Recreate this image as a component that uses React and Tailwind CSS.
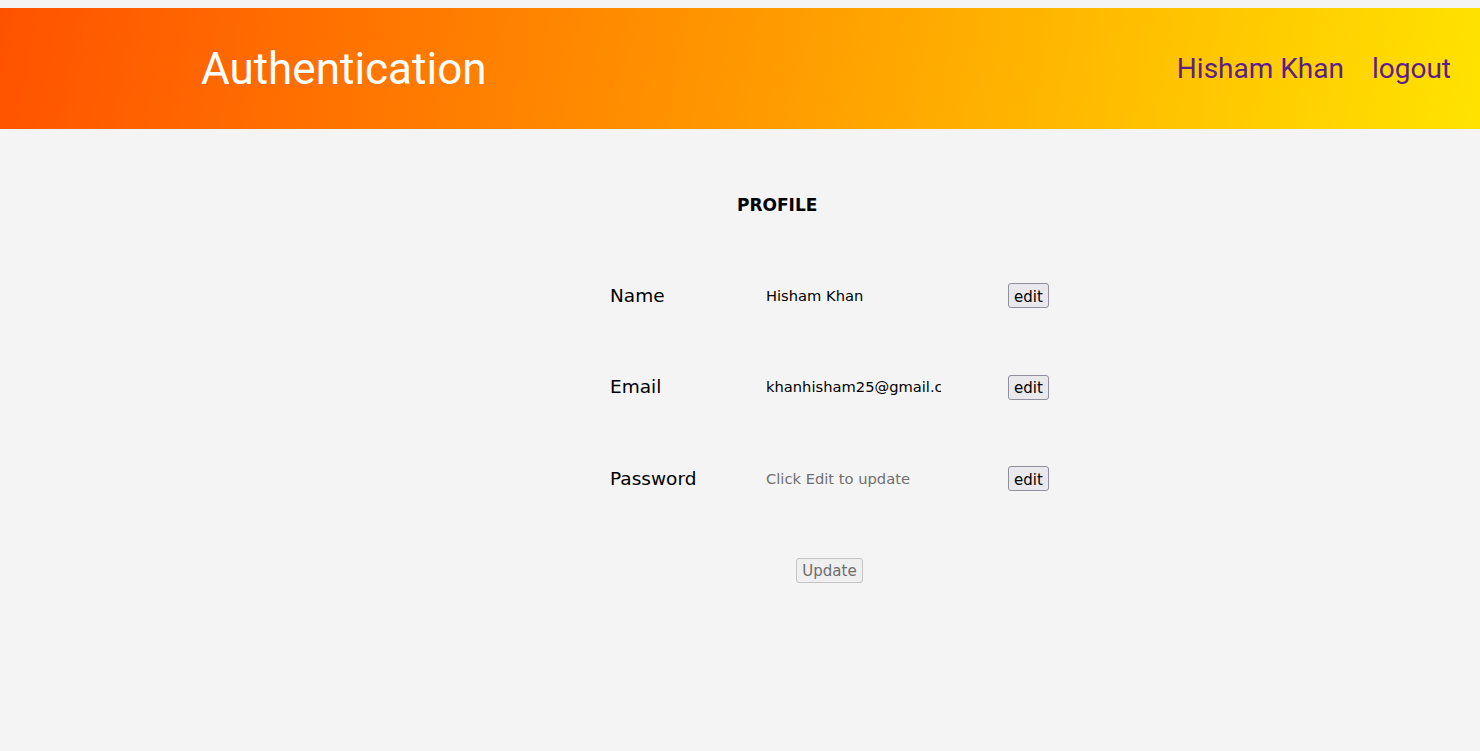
import React from 'react';

const fields = [
    { label: 'Name', value: 'Hisham Khan' },
    { label: 'Email', value: 'khanhisham25@gmail.com' },
    { label: 'Password', value: '', placeholder: 'Click Edit to update' },
];

// one row of the profile form
const FieldRow = ({ label, value, placeholder }) => (
    <div className="flex items-center h-[91.5px]">
        <label className="w-[156px] text-[18.5px] text-black">{label}</label>
        <input
            readOnly
            value={value}
            placeholder={placeholder}
            className="w-[175px] bg-transparent outline-none text-[14.7px] text-black placeholder:text-[#6f6f6f] p-0"
        />
        <button className="ml-[67px] h-[25px] w-[41px] pt-[3px] text-[15px] leading-none text-black bg-[#e9e9ed] border border-[#8f8f9d] rounded-[3px]">
            edit
        </button>
    </div>
);

const App = () => {
    return (
        <div className="min-h-[751px] bg-[#f4f4f4] pt-[8px] font-['DejaVu_Sans',sans-serif]">
            <header className="h-[121px] flex items-center justify-between pl-[201px] pr-[29px] bg-[linear-gradient(100deg,#ff5200_0%,#ff9800_50%,#ffe300_100%)]">
                <h1 className="text-[44px] text-white font-['Roboto',sans-serif] leading-none">Authentication</h1>
                <nav className="flex items-center gap-[28px] text-[28px] text-[#5c1e8c] font-['Roboto',sans-serif]">
                    <a href="#">Hisham Khan</a>
                    <a href="#">logout</a>
                </nav>
            </header>

            <main className="pl-[610px]">
                <h2 className="mt-[68px] pl-[127px] text-[17px] font-bold text-black leading-none">PROFILE</h2>
                <div className="mt-[36px]">
                    {fields.map(f => (
                        <FieldRow key={f.label} {...f} />
                    ))}
                </div>
                <button
                    disabled
                    className="mt-[33px] ml-[186px] h-[25px] w-[67px] pt-[2px] text-[15px] leading-none text-[#6d6d6d] bg-[#efefef] border border-[#c3c3c3] rounded-[3px]"
                >
                    Update
                </button>
            </main>
        </div>
    );
};

export default App;
